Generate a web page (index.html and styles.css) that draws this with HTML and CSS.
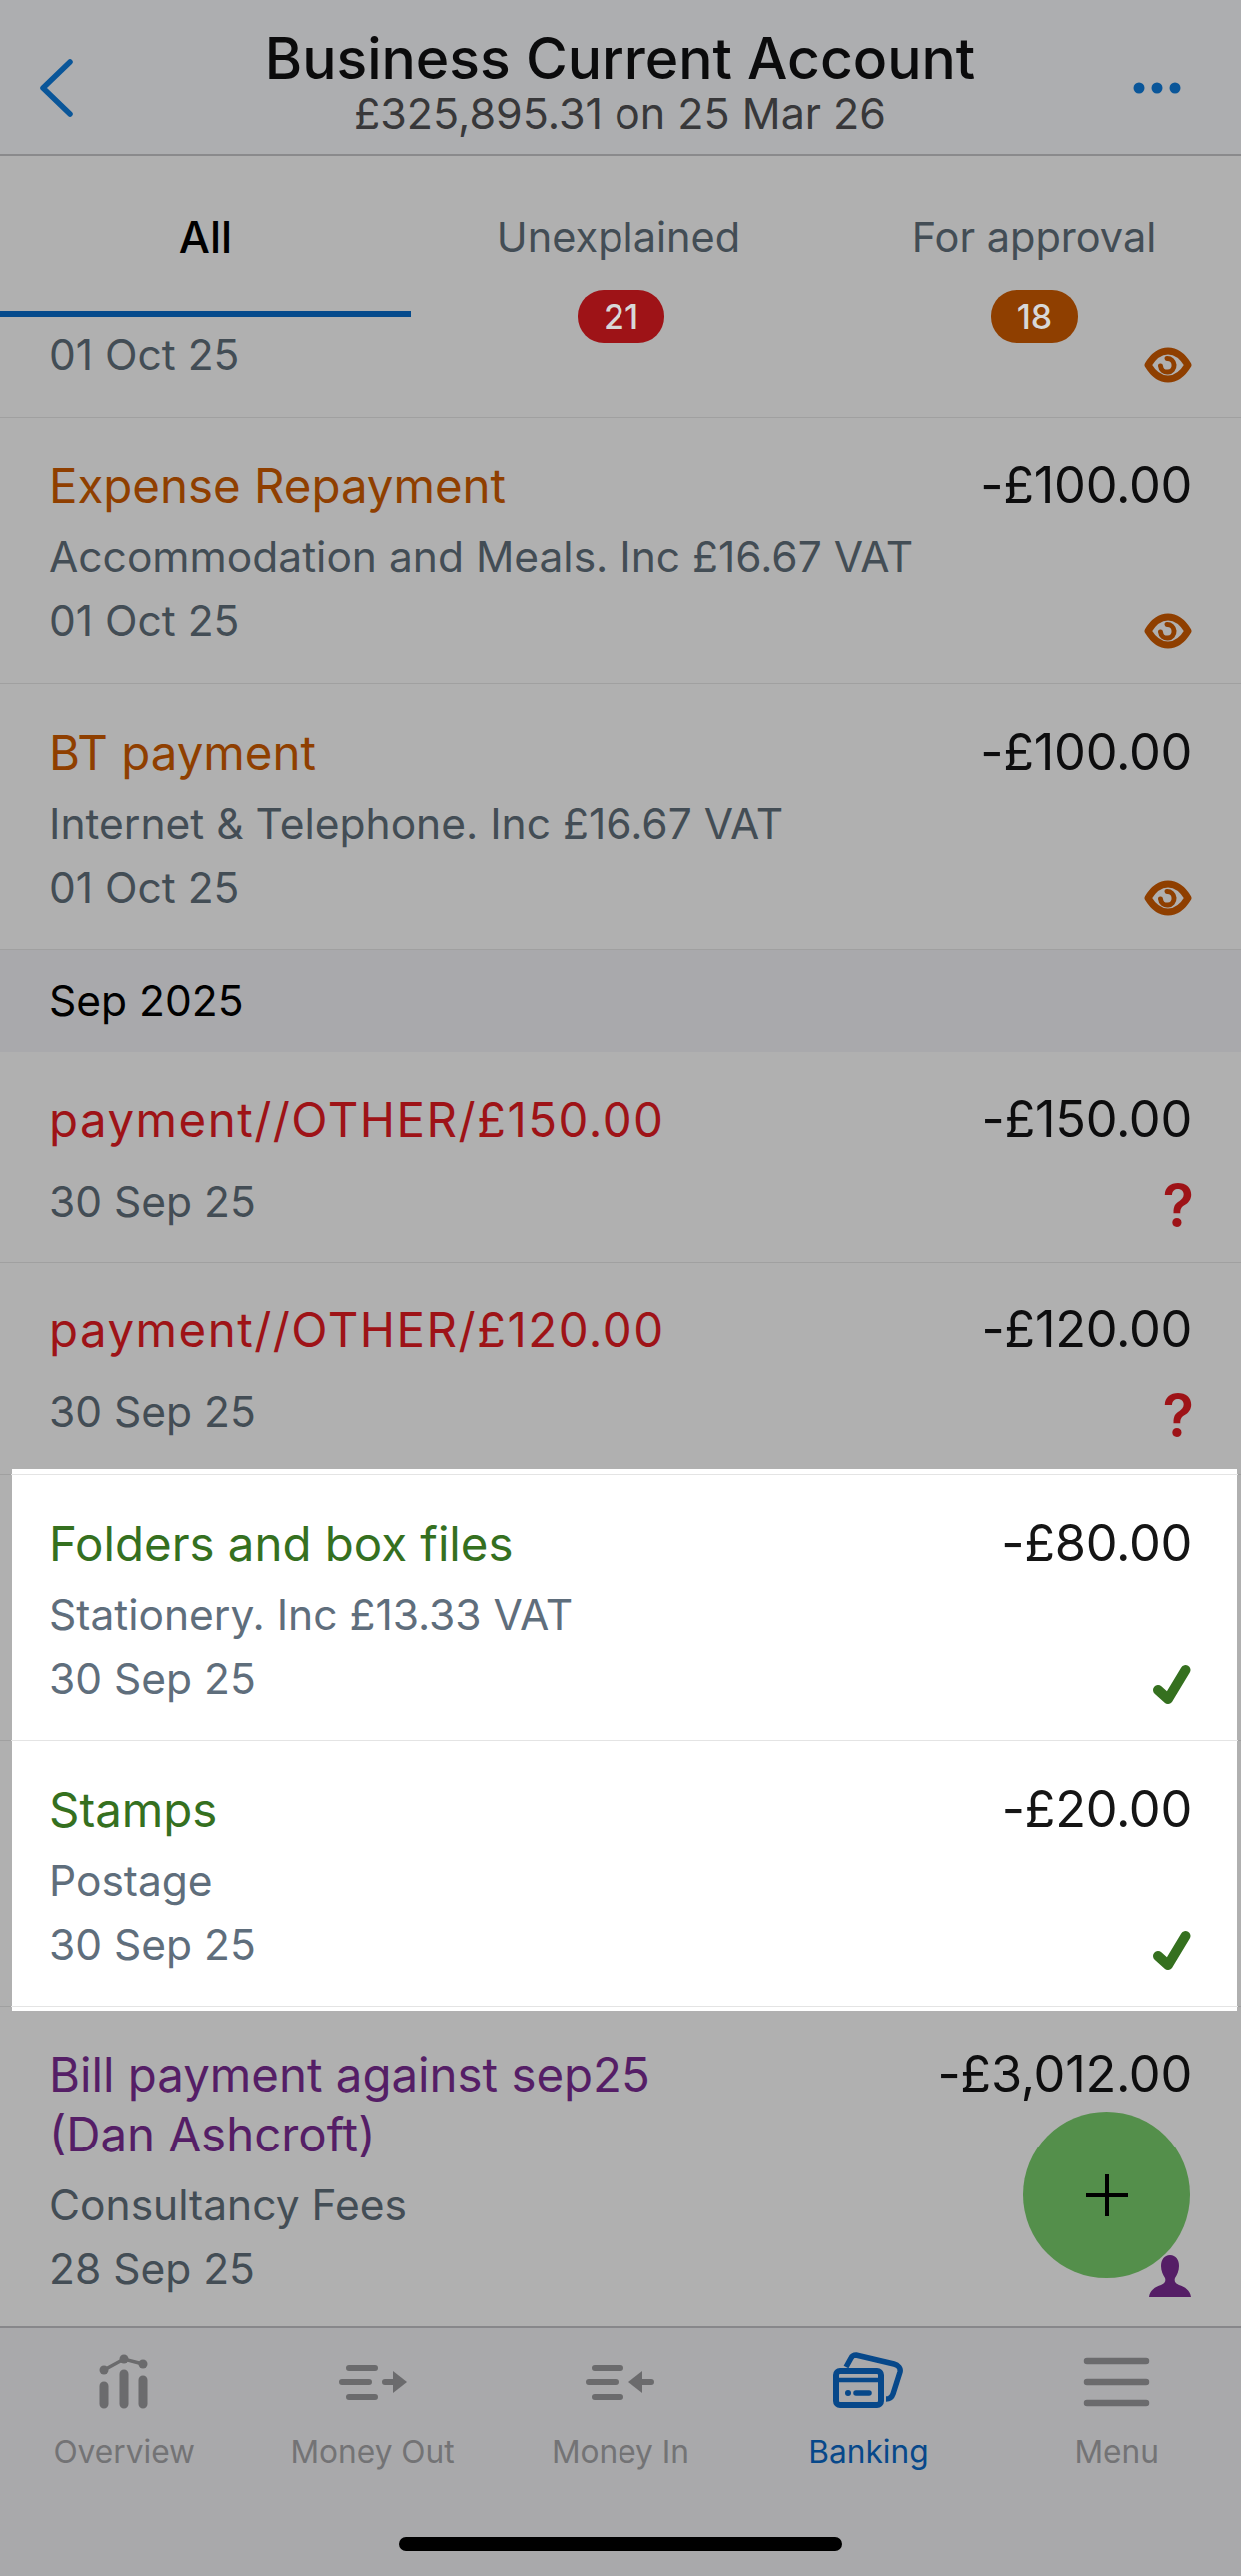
FILE: index.html
```html
<!DOCTYPE html>
<html lang="en">
<head>
<meta charset="utf-8">
<title>Business Current Account</title>
<link rel="stylesheet" href="styles.css">
</head>
<body>
<svg class="defs" width="0" height="0" aria-hidden="true">
  <defs>
    <symbol id="eye" viewBox="0 0 48 36">
      <path d="M4 18C10 8 16 4 24 4s14 4 20 14C38 28 32 32 24 32S10 28 4 18Z" fill="none" stroke="currentColor" stroke-width="7" stroke-linejoin="round"/>
      <path d="M23 11.500a6.800 6.800 0 1 1-6.500 7.500" fill="none" stroke="currentColor" stroke-width="5" stroke-linecap="round"/>
    </symbol>
    <symbol id="check" viewBox="0 0 40 40">
      <path d="M6 26l10 9L33.500 6" fill="none" stroke="currentColor" stroke-width="10" stroke-linecap="round" stroke-linejoin="round"/>
    </symbol>
  </defs>
</svg>
<div class="screen">
  <header class="topbar">
    <svg class="back" viewBox="0 0 34 58" aria-hidden="true"><path d="M31 3L4 29l27 26" fill="none" stroke="currentColor" stroke-width="5.500" stroke-linecap="round" stroke-linejoin="round"/></svg>
    <div class="topbar-titles">
      <div class="topbar-title">Business Current Account</div>
      <div class="topbar-sub">£325,895.31 on 25 Mar 26</div>
    </div>
    <svg class="more" viewBox="0 0 48 12" aria-hidden="true"><circle cx="6" cy="6" r="5.500"/><circle cx="24" cy="6" r="5.500"/><circle cx="42" cy="6" r="5.500"/></svg>
  </header>

  <nav class="tabs">
    <div class="tab tab-active">All</div>
    <div class="tab tab-mid">Unexplained<span class="badge badge-red">21</span></div>
    <div class="tab">For approval<span class="badge badge-orange">18</span></div>
  </nav>

  <main class="list">
    <section class="row row-tail">
      <div class="row-main"><div class="line">01 Oct 25</div></div>
      <div class="row-side"><svg class="icon-eye orange"><use href="#eye"/></svg></div>
    </section>
    <section class="row">
      <div class="row-main">
        <div class="name orange">Expense Repayment</div>
        <div class="line">Accommodation and Meals. Inc £16.67 VAT</div>
        <div class="line">01 Oct 25</div>
      </div>
      <div class="row-side"><div class="amount">-£100.00</div><svg class="icon-eye orange"><use href="#eye"/></svg></div>
    </section>
    <section class="row">
      <div class="row-main">
        <div class="name orange">BT payment</div>
        <div class="line">Internet &amp; Telephone. Inc £16.67 VAT</div>
        <div class="line">01 Oct 25</div>
      </div>
      <div class="row-side"><div class="amount">-£100.00</div><svg class="icon-eye orange"><use href="#eye"/></svg></div>
    </section>
    <div class="month">Sep 2025</div>
    <section class="row row-short">
      <div class="row-main">
        <div class="name red">payment//OTHER/£150.00</div>
        <div class="line">30 Sep 25</div>
      </div>
      <div class="row-side"><div class="amount">-£150.00</div><div class="query red">?</div></div>
    </section>
    <section class="row row-short row-before-lit">
      <div class="row-main">
        <div class="name red">payment//OTHER/£120.00</div>
        <div class="line">30 Sep 25</div>
      </div>
      <div class="row-side"><div class="amount">-£120.00</div><div class="query red">?</div></div>
    </section>
    <div class="lit-cap lit-cap-top"></div>
    <section class="row row-lit">
      <div class="row-main">
        <div class="name green">Folders and box files</div>
        <div class="line">Stationery. Inc £13.33 VAT</div>
        <div class="line">30 Sep 25</div>
      </div>
      <div class="row-side"><div class="amount">-£80.00</div><svg class="icon-check green"><use href="#check"/></svg></div>
    </section>
    <section class="row row-lit">
      <div class="row-main">
        <div class="name green">Stamps</div>
        <div class="line">Postage</div>
        <div class="line">30 Sep 25</div>
      </div>
      <div class="row-side"><div class="amount">-£20.00</div><svg class="icon-check green"><use href="#check"/></svg></div>
    </section>
    <div class="lit-cap"></div>
    <section class="row row-after-lit">
      <div class="row-main">
        <div class="name purple">Bill payment against sep25<br>(Dan Ashcroft)</div>
        <div class="line">Consultancy Fees</div>
        <div class="line">28 Sep 25</div>
      </div>
      <div class="row-side"><div class="amount">-£3,012.00</div>
        <svg class="icon-person purple" viewBox="0 0 44 42" aria-hidden="true"><path d="M22 0c6 0 9 5 9 11 0 5-2 9-4 12-1 3 0 5 4 7 6 2 11 5 12 12H1c1-7 6-10 12-12 4-2 5-4 4-7-2-3-4-7-4-12C13 5 16 0 22 0Z" fill="currentColor"/></svg>
      </div>
    </section>
  </main>

  <button class="fab" type="button" aria-label="Add">
    <svg viewBox="0 0 44 44" aria-hidden="true"><path d="M22 1v42M1 22h42" stroke="currentColor" stroke-width="4"/></svg>
  </button>

  <footer class="bottom">
    <div class="nav">
      <div class="nav-item">
        <svg class="nav-icon" viewBox="0 0 100 60" aria-hidden="true">
          <path d="M30 18L50 7l19 5" fill="none" stroke="currentColor" stroke-width="3.500"/>
          <circle cx="30" cy="18" r="4.500" fill="currentColor"/><circle cx="50" cy="7" r="4.500" fill="currentColor"/><circle cx="69" cy="12" r="4.500" fill="currentColor"/>
          <path d="M30 34v18M50 22v30M69 28v24" stroke="currentColor" stroke-width="9" stroke-linecap="round"/>
        </svg>
        <span>Overview</span>
      </div>
      <div class="nav-item">
        <svg class="nav-icon" viewBox="0 0 100 60" aria-hidden="true">
          <path d="M26 16h26M19 30h27M26 45h26M62 30h10" stroke="currentColor" stroke-width="6" stroke-linecap="round"/>
          <path d="M70 19l14 11-14 11Z" fill="currentColor"/>
        </svg>
        <span>Money Out</span>
      </div>
      <div class="nav-item">
        <svg class="nav-icon" viewBox="0 0 100 60" aria-hidden="true">
          <path d="M24 16h26M18 30h27M24 45h26M70 30h11" stroke="currentColor" stroke-width="6" stroke-linecap="round"/>
          <path d="M72 19L58 30l14 11Z" fill="currentColor"/>
        </svg>
        <span>Money In</span>
      </div>
      <div class="nav-item nav-active">
        <svg class="nav-icon" viewBox="0 0 100 60" aria-hidden="true">
          <path d="M28 15l5-9c1-2 3-3 5-3l38 9c4 1 7 4 6 8l-7 22c-1 3-3 5-7 5" fill="none" stroke="currentColor" stroke-width="5.500" stroke-linejoin="round"/>
          <rect x="18" y="19" width="45" height="34" rx="4" fill="none" stroke="currentColor" stroke-width="6"/>
          <path d="M18 28h45" stroke="currentColor" stroke-width="4.500"/>
          <circle cx="30" cy="41" r="3" fill="currentColor"/>
          <path d="M38 41h13" stroke="currentColor" stroke-width="5.500" stroke-linecap="round"/>
        </svg>
        <span>Banking</span>
      </div>
      <div class="nav-item">
        <svg class="nav-icon" viewBox="0 0 100 60" aria-hidden="true">
          <path d="M20 9h59M20 30h59M20 51h59" stroke="currentColor" stroke-width="6.500" stroke-linecap="round"/>
        </svg>
        <span>Menu</span>
      </div>
    </div>
    <div class="home-indicator"></div>
  </footer>
</div>
</body>
</html>
```

FILE: styles.css
```css
* { box-sizing: border-box; }
html, body { margin: 0; padding: 0; }
body { background: #b0b0b0; font-family: Inter, "Liberation Sans", sans-serif; }
.defs { position: absolute; }

.screen {
  position: relative;
  width: 1242px;
  height: 2579px;
  display: flex;
  flex-direction: column;
  overflow: hidden;
  background: #b0b0b0;
}

.topbar {
  height: 156px;
  flex: none;
  display: grid;
  grid-template-columns: 1fr auto 1fr;
  align-items: center;
  padding: 0 60px 0 39px;
  background: #adaeb0;
  border-bottom: 2px solid #8a8a8c;
}
.back { width: 34px; height: 58px; color: #0a5699; margin-top: 22px; }
.more { width: 48px; height: 12px; fill: #0a5699; justify-self: end; margin-top: 22px; }
.topbar-titles { text-align: center; margin-right: -20px; }
.topbar-title { font-size: 57px; line-height: 62px; font-weight: 500; color: #0b0b0c; margin-top: 8px; white-space: nowrap; }
.topbar-sub { font-size: 43px; line-height: 44px; color: #38383a; margin-top: 1px; }

.tabs {
  height: 161px;
  flex: none;
  display: grid;
  grid-template-columns: repeat(3, 414px);
  background: #b0b0b0;
  position: relative;
  z-index: 2;
}
.tab {
  position: relative;
  text-align: center;
  font-size: 41.500px;
  line-height: 50px;
  padding-top: 56px;
  color: #434d55;
}
.tab-mid { padding-right: 4px; }
.tab-active { color: #000; font-weight: 500; font-size: 44px; border-bottom: 6px solid #054a8c; margin-right: 3px; }
.badge {
  position: absolute;
  left: 164px;
  top: 134px;
  width: 87px;
  height: 53px;
  border-radius: 26px;
  font-size: 34px;
  line-height: 53px;
  font-weight: 500;
  color: #d8d8d8;
}
.badge-red { background: #9e1317; }
.badge-orange { background: #8f3f00; }

.list { flex: 1; min-height: 0; overflow: hidden; }

.row {
  display: flex;
  justify-content: space-between;
  padding: 39px 49px 29.500px;
  border-bottom: 1px solid #a0a0a0;
}
.row-tail { padding-top: 6px; padding-bottom: 30px; }
.row-short .name { margin-bottom: 20px; }
.row-short { padding-top: 37.500px; padding-bottom: 28.500px; }
.row-before-lit { padding-bottom: 25px; border-bottom: 0; }
.row-after-lit { padding-top: 34px; padding-bottom: 25px; border-bottom: 0; }

.row-lit {
  padding-bottom: 29px;
  background: linear-gradient(to right, #b0b0b0 12px, #fff 12px, #fff 1238px, #b0b0b0 1238px);
  border-image: linear-gradient(to right, #a0a0a0 12px, #e4e4e4 12px, #e4e4e4 1238px, #a0a0a0 1238px) 1;
}
.lit-cap {
  height: 4px;
  background: linear-gradient(to right, #b0b0b0 12px, #fff 12px, #fff 1238px, #b0b0b0 1238px);
}
.lit-cap-top { height: 6px; border-bottom: 1px solid; border-image: linear-gradient(to right, #a0a0a0 12px, #e4e4e4 12px, #e4e4e4 1238px, #a0a0a0 1238px) 1; }

.row-main { min-width: 0; }
.row-side { display: flex; flex-direction: column; justify-content: space-between; align-items: flex-end; flex: none; }

.name { font-size: 47.400px; line-height: 60px; margin-bottom: 9px; }
.name.red { letter-spacing: 1.500px; }
.line { font-size: 42.500px; line-height: 64px; color: #434d55; }
.amount { font-size: 50.500px; line-height: 58px; color: #0d0d0e; letter-spacing: -0.300px; }

.row-lit .line { color: #5f6e7c; }
.row-lit .amount { color: #151515; }

.orange { color: #8f3f00; }
.red { color: #9e1317; }
.green { color: #35701f; }
.purple { color: #551e66; }

.icon-eye { width: 48px; height: 36px; margin-top: auto; margin-bottom: 4px; display: block; }
.icon-check { width: 40px; height: 40px; margin-bottom: 7px; display: block; }
.icon-person { width: 44px; height: 42px; margin-bottom: 4px; display: block; }
.query { font-size: 58px; line-height: 50px; font-weight: 600; margin-right: -2px; margin-bottom: 4px; }

.month {
  height: 102px;
  padding-left: 49px;
  font-size: 42.500px;
  line-height: 102px;
  color: #000;
  background: #a9a9ac;
}

.fab {
  position: absolute;
  left: 1024px;
  top: 2114px;
  width: 167px;
  height: 167px;
  border: 0;
  padding: 0;
  border-radius: 50%;
  background: #548f4b;
  color: #000;
  display: flex;
  align-items: center;
  justify-content: center;
}
.fab svg { width: 44px; height: 44px; }

.bottom {
  height: 250px;
  flex: none;
  background: #a9a9ab;
  border-top: 2px solid #87878a;
  position: relative;
}
.nav { display: grid; grid-template-columns: repeat(5, 1fr); padding-top: 24px; }
.nav-item {
  display: flex;
  flex-direction: column;
  align-items: center;
  font-size: 31.700px;
  line-height: 40px;
  color: #737375;
}
.nav-icon { width: 100px; height: 60px; color: #6b6b6d; margin-bottom: 20px; }
.nav-active { color: #07488a; }
.nav-active .nav-icon { color: #07488a; }

.home-indicator {
  position: absolute;
  left: 399px;
  bottom: 25px;
  width: 444px;
  height: 14px;
  border-radius: 7px;
  background: #000;
}
```
